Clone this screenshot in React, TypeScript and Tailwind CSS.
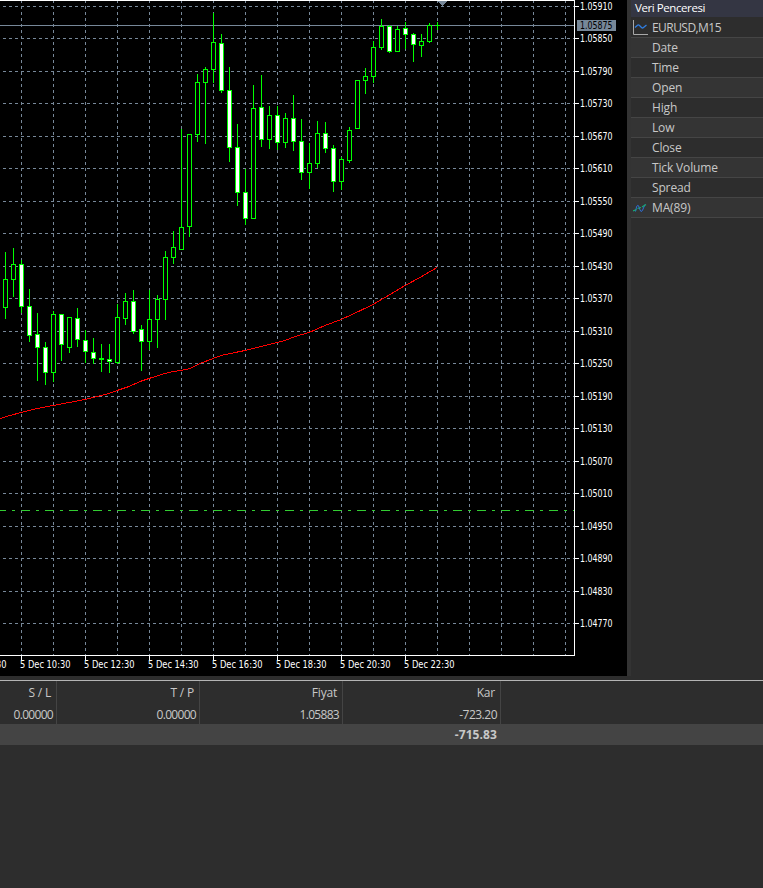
import React from "react";

type Candle = [x: number, high: number, top: number, bottom: number, low: number, filled?: 1];

// Pixel rows per candle; bottom and low are exclusive.
const candles: Candle[] = [
  [5, 252, 279, 308, 319], [13, 248, 264, 280, 297], [21, 260, 264, 307, 313, 1],
  [29, 289, 306, 336, 342, 1], [37, 313, 334, 348, 381, 1], [45, 342, 347, 373, 385, 1],
  [53, 311, 314, 373, 382], [61, 314, 314, 345, 361, 1], [69, 317, 317, 348, 353],
  [77, 308, 318, 340, 347, 1], [85, 330, 340, 352, 363, 1], [93, 338, 352, 359, 364, 1],
  [101, 344, 358, 360, 372], [109, 344, 359, 362, 373, 1], [117, 304, 317, 363, 364],
  [125, 293, 301, 319, 325], [133, 290, 301, 332, 334, 1], [141, 325, 329, 342, 371, 1],
  [149, 290, 319, 342, 350], [157, 295, 299, 320, 348], [165, 251, 257, 300, 320],
  [173, 231, 247, 258, 264], [181, 129, 227, 250, 250], [189, 134, 134, 227, 237],
  [197, 74, 82, 135, 142], [205, 67, 69, 83, 144], [213, 13, 42, 70, 83],
  [221, 34, 43, 91, 93, 1], [229, 67, 90, 148, 162, 1], [237, 124, 147, 193, 206, 1],
  [245, 169, 192, 219, 225, 1], [253, 85, 108, 219, 219], [261, 75, 107, 140, 147, 1],
  [269, 106, 115, 140, 149], [277, 106, 115, 143, 150, 1], [285, 113, 118, 143, 148],
  [293, 95, 118, 142, 151, 1], [301, 119, 141, 173, 180, 1], [309, 143, 163, 173, 189],
  [317, 121, 133, 164, 168], [325, 122, 133, 149, 153, 1], [333, 145, 148, 182, 192, 1],
  [341, 157, 159, 182, 190], [349, 127, 130, 161, 163], [357, 80, 80, 129, 129],
  [365, 68, 76, 81, 94], [373, 41, 47, 77, 83], [381, 19, 26, 48, 50],
  [389, 25, 26, 52, 53, 1], [397, 26, 29, 52, 52], [405, 22, 28, 35, 49, 1],
  [413, 33, 34, 45, 62, 1], [421, 34, 41, 46, 57], [429, 23, 25, 42, 43],
  [437, 22, 25, 26, 30],
];

const prices: [number, string][] = [
  [6, "1.05910"], [38, "1.05850"], [71, "1.05790"], [103, "1.05730"], [136, "1.05670"],
  [168, "1.05610"], [201, "1.05550"], [233, "1.05490"], [266, "1.05430"], [298, "1.05370"],
  [331, "1.05310"], [363, "1.05250"], [396, "1.05190"], [428, "1.05130"], [461, "1.05070"],
  [493, "1.05010"], [526, "1.04950"], [558, "1.04890"], [591, "1.04830"], [623, "1.04770"],
];

const columns = Array.from({ length: 18 }, (_, i) => 21 + i * 32);
const times = ["10:30", "12:30", "14:30", "16:30", "18:30", "20:30", "22:30"];

const average =
  "0,418 10,415 21,412 37,408 53,405 69,402 85,399 101,395 109,393 117,390 129,386 140,381 149,378 165,373 173,371 181,370 190,368 200,363 213,358 221,355 235,352 245,350 261,346 277,342 285,340 295,336 309,332 325,325 341,319 350,315 373,304 390,294 405,285 420,277 437,267";

function AxisText({ x, y, width, children, fill = "#fff" }: { x: number; y: number; width: number; children: string; fill?: string }) {
  return (
    <text x={x} y={y} textLength={width} lengthAdjust="spacingAndGlyphs" fill={fill} className="text-[10.5px] font-['DejaVu_Sans_Condensed','DejaVu_Sans',sans-serif]">
      {children}
    </text>
  );
}

function Chart() {
  return (
    <svg width="627" height="676" viewBox="0 0 627 676" className="block shrink-0 bg-black" shapeRendering="crispEdges">
      <g stroke="#778899" strokeDasharray="3 3">
        {prices.map(([y]) => <path key={y} d={`M3 ${y + 0.5}H574`} />)}
        {columns.map((x) => <path key={x} d={`M${x + 0.5} 0V655`} />)}
      </g>
      <path d="M0 25.5H574" stroke="#778899" />
      <path d="M437 0H448L442.5 6Z" fill="#778899" />
      <path d="M0 510.5H574" stroke="#32cd32" strokeDasharray="9 6 3 6" strokeDashoffset="3" />
      {candles.map(([x, high, top, bottom, low, filled]) => (
        <g key={x} fill="#00ff00">
          <rect x={x} y={high} width="1" height={low - high} />
          <rect x={x - 2} y={top} width="5" height={bottom - top} />
          {bottom - top > 2 && (
            <rect x={x - 1} y={top + 1} width="3" height={bottom - top - 2} fill={filled ? "#fff" : "#000"} />
          )}
        </g>
      ))}
      <polyline points={average} transform="translate(0 .5)" fill="none" stroke="#ff0000" />
      <path d="M0 .5H574.5V655.5H0" fill="none" stroke="#fff" />
      {prices.map(([y, label]) => (
        <g key={label}>
          <path d={`M575 ${y + 0.5}H579`} stroke="#fff" />
          <AxisText x={580} y={y + 4} width={32.5}>{label}</AxisText>
        </g>
      ))}
      <rect x="577" y="20" width="39" height="11" fill="#778899" />
      <AxisText x={580} y={29} width={32.5} fill="#000">1.05875</AxisText>
      <AxisText x={-4} y={668} width={10.5}>30</AxisText>
      {times.map((t, i) => (
        <g key={t}>
          <path d={`M${21.5 + i * 64} 656V660`} stroke="#fff" />
          <AxisText x={20 + i * 64} y={668} width={50.5}>{`5 Dec ${t}`}</AxisText>
        </g>
      ))}
    </svg>
  );
}

function LineIcon() {
  return (
    <svg width="16" height="16" viewBox="0 0 16 16" fill="none">
      <path d="M.5 0V14.5H15" stroke="#a8a8a8" />
      <path d="M2 7.5L4.5 5.2Q5.5 4.5 6.5 5.5L8.5 7.5Q9.5 8.5 10.5 7.5L13.5 5" stroke="#2f7de1" strokeWidth="1.3" />
    </svg>
  );
}

function IndicatorIcon() {
  return (
    <svg width="14" height="12" viewBox="0 0 14 12" fill="none">
      <path d="M2.500 9.500L3.500 5Q5 1.500 6 5T8 9.500Q9.500 9.500 10.500 6L12 2.500" stroke="#2f6fd8" />
      <path d="M0 9L3.500 7.500M4.500 6.500L8 5.500M9 5L13 2.500" stroke="#18a878" strokeWidth="1.3" />
    </svg>
  );
}

const rows = ["EURUSD,M15", "Date", "Time", "Open", "High", "Low", "Close", "Tick Volume", "Spread", "MA(89)"];

function DataWindow() {
  return (
    <aside className="ml-1 flex min-w-0 flex-1 flex-col bg-[#2d2d2d] text-[12px] text-[#c8c8c8]">
      <header className="h-[17px] shrink-0 bg-[#343643] pl-1 text-[11.5px] leading-[15px] tracking-[-0.42px] text-white">Veri Penceresi</header>
      {rows.map((row, i) => (
        <div key={row} className={`flex shrink-0 items-center border-b border-[#454545] ${i === 0 ? "h-[21px] pt-px tracking-[-0.55px]" : "h-5 tracking-[-0.15px]"} ${i % 2 ? "bg-[#343434]" : "bg-[#2d2d2d]"}`}>
          <span className="flex w-[21px] shrink-0 pl-[2px]">
            {i === 0 && <LineIcon />}
            {i === 9 && <IndicatorIcon />}
          </span>
          <span className="whitespace-nowrap">{row}</span>
        </div>
      ))}
    </aside>
  );
}

const fields = [
  { title: "S / L", value: "0.00000", width: "w-[57px]", pad: "pr-[5px]" },
  { title: "T / P", value: "0.00000", width: "w-[143px]", pad: "pr-[5px]" },
  { title: "Fiyat", value: "1.05883", width: "w-[143px]", pad: "pr-[5px]" },
  { title: "Kar", value: "-723.20", width: "w-[158px]", pad: "pr-[5px]" },
];

export default function App() {
  return (
    <main className="flex h-[888px] w-[763px] flex-col overflow-hidden bg-[#2d2d2d] font-['Open_Sans','Noto_Sans',sans-serif]">
      <div className="flex h-[676px] shrink-0 bg-[#333333]">
        <Chart />
        <DataWindow />
      </div>
      <section className="mt-1 flex flex-col border-t border-[#b4b4b4] text-[12px] text-[#c8c8c8]">
        <div className="flex h-[43px]">
          {fields.map((f) => (
            <div key={f.title} className={`flex flex-col border-r border-[#444444] text-right ${f.width}`}>
              <span className={`h-[22px] leading-[23px] tracking-[-0.2px] ${f.pad}`}>{f.title}</span>
              <span className={`h-[21px] pr-[3px] leading-[23px] ${f.title === "Kar" ? "tracking-[-0.5px]" : "tracking-[-0.7px]"}`}>{f.value}</span>
            </div>
          ))}
        </div>
        <div className="h-[21px] w-full bg-[#444444]">
          <div className="w-[497px] text-right font-bold leading-[21px] tracking-[0.1px]">-715.83</div>
        </div>
      </section>
    </main>
  );
}
